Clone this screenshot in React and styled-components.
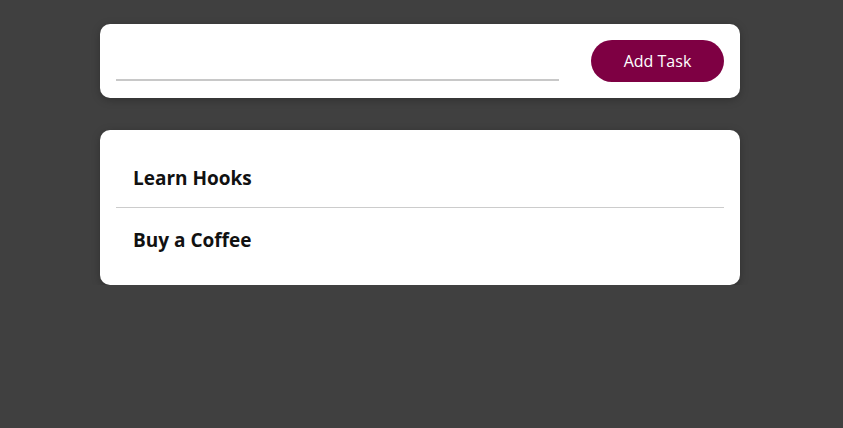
import styled, { createGlobalStyle } from "styled-components";

const GlobalStyle = createGlobalStyle`
  html, body {
    margin: 0;
    padding: 0;
    background: #404040;
    font-family: "Open Sans", "Noto Sans", sans-serif;
  }
`;

const Page = styled.div`
  padding: 24px 103px 0 100px;
  display: flex;
  flex-direction: column;
  gap: 32px;
`;

const Card = styled.div`
  background: #ffffff;
  border-radius: 10px;
  box-shadow: 0 2px 8px rgba(0, 0, 0, 0.25);
  padding: 16px;
`;

const TaskForm = styled.form`
  display: flex;
  align-items: flex-end;
  gap: 32px;
  margin: 0;
`;

const TaskInput = styled.input`
  flex: 1;
  height: 39px;
  border: none;
  border-bottom: 2px solid #c8c8c8;
  outline: none;
  font-family: inherit;
  font-size: 18px;
  padding: 0 4px;
  margin-bottom: 1px;
  background: transparent;
`;

const AddButton = styled.button`
  width: 133px;
  height: 42px;
  border: none;
  border-radius: 21px;
  background: #7e0043;
  color: #ffffff;
  font-family: inherit;
  font-size: 16px;
  font-weight: 500;
  cursor: pointer;
`;

const TaskList = styled.ul`
  list-style: none;
  margin: 0;
  padding: 0;
`;

const TaskItem = styled.li`
  padding: 18px 17px 14px;
  font-size: 19px;
  line-height: 29px;
  font-weight: 700;
  color: #111111;
  border-bottom: ${(p) => (p.last ? "none" : "1px solid #cccccc")};
`;

const tasks = ["Learn Hooks", "Buy a Coffee"];

const App = () => {
  return (
    <>
      <GlobalStyle />
      <Page>
        <Card>
          <TaskForm onSubmit={(e) => e.preventDefault()}>
            <TaskInput type="text" />
            <AddButton type="submit">Add Task</AddButton>
          </TaskForm>
        </Card>

        <Card>
          <TaskList>
            {tasks.map((task, i) => (
              <TaskItem key={task} last={i === tasks.length - 1}>
                {task}
              </TaskItem>
            ))}
          </TaskList>
        </Card>
      </Page>
    </>
  );
};

export default App;
